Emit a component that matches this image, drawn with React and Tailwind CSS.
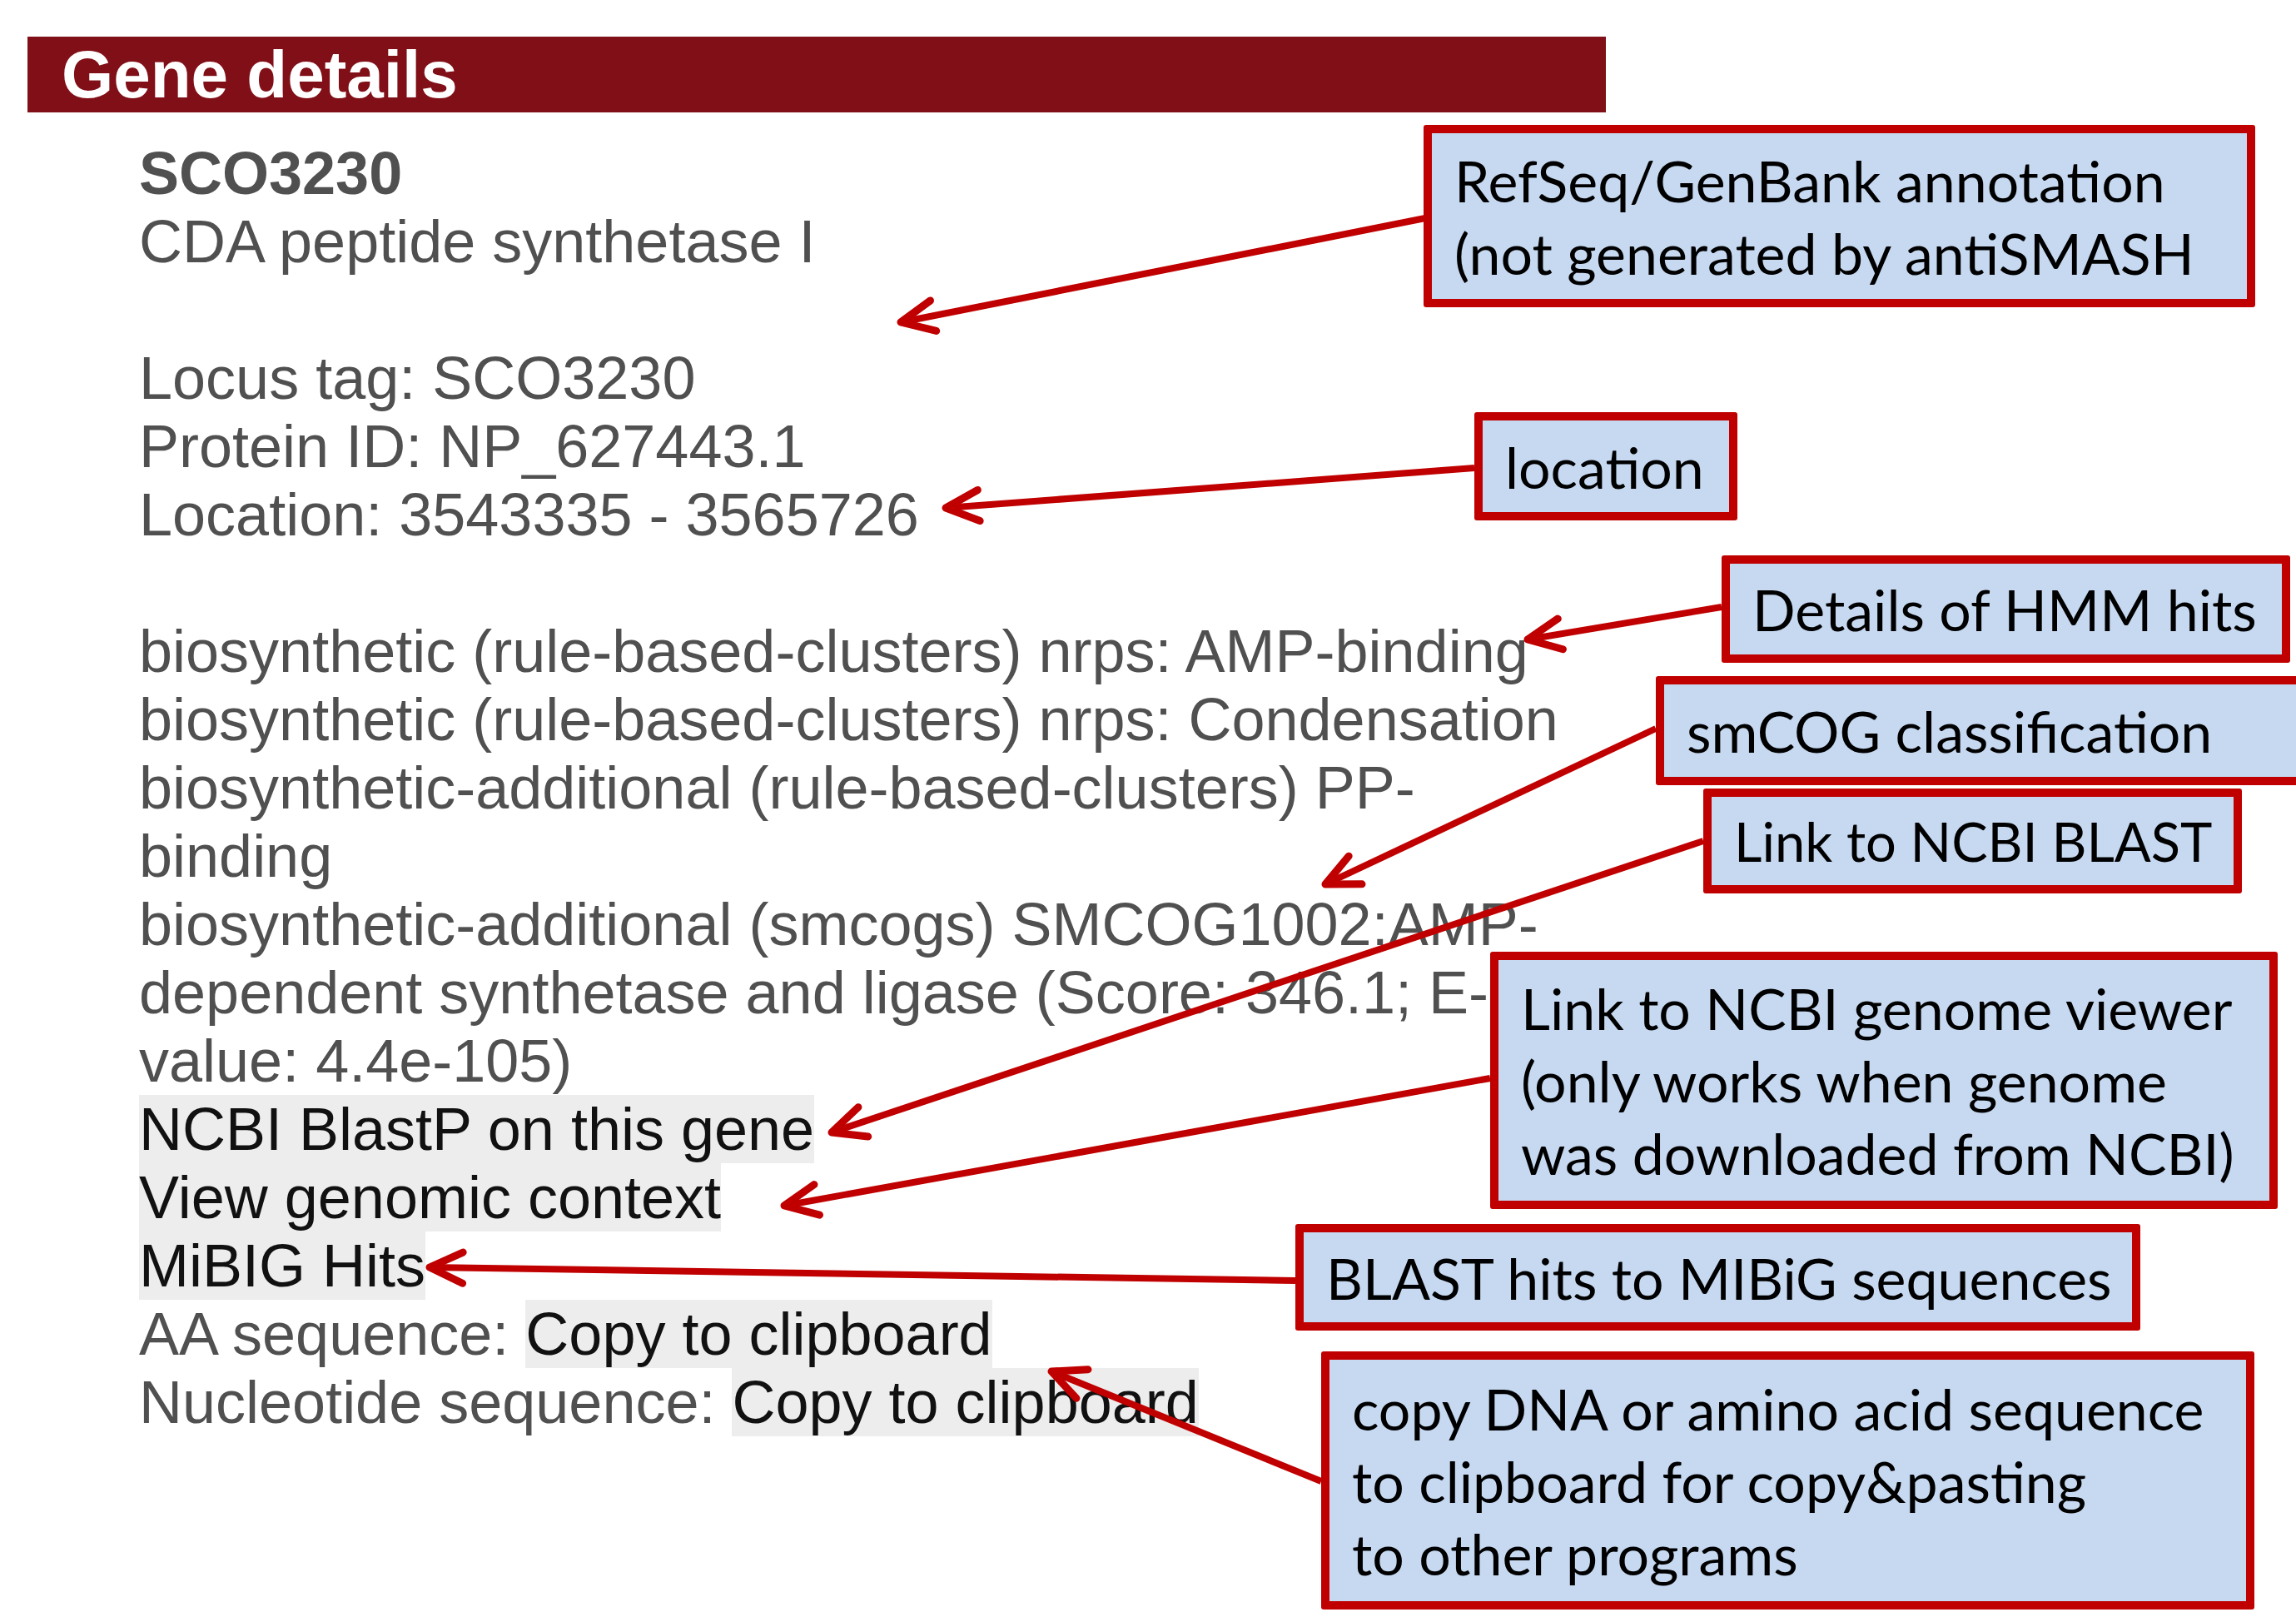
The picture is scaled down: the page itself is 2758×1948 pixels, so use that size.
import React from "react";

const textLines = [
  "CDA peptide synthetase I",
  "",
  "Locus tag: SCO3230",
  "Protein ID: NP_627443.1",
  "Location: 3543335 - 3565726",
  "",
  "biosynthetic (rule-based-clusters) nrps: AMP-binding",
  "biosynthetic (rule-based-clusters) nrps: Condensation",
  "biosynthetic-additional (rule-based-clusters) PP-",
  "binding",
  "biosynthetic-additional (smcogs) SMCOG1002:AMP-",
  "dependent synthetase and ligase (Score: 346.1; E-",
  "value: 4.4e-105)",
];

// arrows: [fromX, fromY, tipX, tipY]
const arrows = [
  [1712, 262, 1082, 387],
  [1771, 562, 1136, 610],
  [2068, 729, 1835, 768],
  [1989, 875, 1592, 1062],
  [2046, 1010, 999, 1360],
  [1790, 1295, 942, 1448],
  [1556, 1538, 516, 1522],
  [1587, 1779, 1263, 1647],
];

function Arrow({ a }) {
  const [x1, y1, x2, y2] = a;
  const ang = Math.atan2(y1 - y2, x1 - x2);
  const len = 44;
  const spread = (25 * Math.PI) / 180;
  const ax = x2 + len * Math.cos(ang + spread);
  const ay = y2 + len * Math.sin(ang + spread);
  const bx = x2 + len * Math.cos(ang - spread);
  const by = y2 + len * Math.sin(ang - spread);
  return (
    <g stroke="#c00000" fill="none" strokeLinecap="round" strokeLinejoin="round">
      <line x1={x1} y1={y1} x2={x2} y2={y2} strokeWidth="8" strokeLinecap="butt" />
      <polyline points={`${ax},${ay} ${x2},${y2} ${bx},${by}`} strokeWidth="9" />
    </g>
  );
}

function Callout({ className, lines, size = "text-[68px]" }) {
  return (
    <div
      className={`absolute flex flex-col justify-center border-[10px] border-[#c00000] rounded-[3px] bg-[#c6d9f1] pl-[27px] text-black leading-[87px] whitespace-nowrap font-['Lato','Open_Sans',sans-serif] ${size} ${className}`}
    >
      {lines.map((l, i) => (
        <div key={i}>{l}</div>
      ))}
    </div>
  );
}

export default function App() {
  return (
    <div className="relative w-[2758px] h-[1948px] overflow-hidden bg-white">
      {/* Gene details panel */}
      <div className="pt-[44px] font-['Liberation_Sans','Arial',sans-serif]">
        <div className="ml-[33px] w-[1896px] h-[91px] bg-[#810f17] flex items-center pl-[41px]">
          <span className="text-white font-bold text-[80px] leading-[91px]">Gene details</span>
        </div>

        <div className="mt-[32px] pl-[167px] text-[72px] leading-[82px] text-[#505050] whitespace-nowrap">
          <div className="font-bold">SCO3230</div>
          {textLines.map((l, i) => (
            <div key={i} className="h-[82px]">{l}</div>
          ))}
          <div>
            <span className="inline-block bg-[#ededed] text-[#111111]">NCBI BlastP on this gene</span>
          </div>
          <div>
            <span className="inline-block bg-[#ededed] text-[#111111]">View genomic context</span>
          </div>
          <div>
            <span className="inline-block bg-[#ededed] text-[#111111]">MiBIG Hits</span>
          </div>
          <div>
            AA sequence: <span className="inline-block bg-[#ededed] text-[#111111]">Copy to clipboard</span>
          </div>
          <div>
            Nucleotide sequence: <span className="inline-block bg-[#ededed] text-[#111111]">Copy to clipboard</span>
          </div>
        </div>
      </div>

      {/* annotation arrows */}
      <svg className="absolute left-0 top-0 pointer-events-none" width="2758" height="1948">
        {arrows.map((a, i) => (
          <Arrow key={i} a={a} />
        ))}
      </svg>

      {/* annotation callouts */}
      <Callout className="left-[1710px] top-[150px] w-[999px] h-[219px]" lines={["RefSeq/GenBank annotation", "(not generated by antiSMASH"]} />
      <Callout className="left-[1771px] top-[495px] w-[316px] h-[130px]" lines={["location"]} />
      <Callout className="left-[2068px] top-[667px] w-[683px] h-[129px]" lines={["Details of HMM hits"]} />
      <Callout className="left-[1989px] top-[812px] w-[820px] h-[131px]" lines={["smCOG classification"]} />
      <Callout className="left-[2046px] top-[947px] w-[647px] h-[126px]" size="text-[65px]" lines={["Link to NCBI BLAST"]} />
      <Callout
        className="left-[1790px] top-[1143px] w-[946px] h-[309px]"
        lines={["Link to NCBI genome viewer", "(only works when genome", "was downloaded from NCBI)"]}
      />
      <Callout className="left-[1556px] top-[1470px] w-[1015px] h-[128px]" lines={["BLAST hits to MIBiG sequences"]} />
      <Callout
        className="left-[1587px] top-[1623px] w-[1121px] h-[310px]"
        lines={["copy DNA or amino acid sequence", "to clipboard for copy&pasting", "to other programs"]}
      />
    </div>
  );
}
